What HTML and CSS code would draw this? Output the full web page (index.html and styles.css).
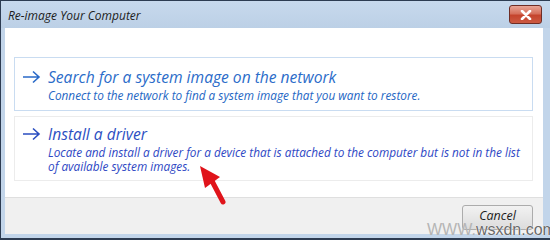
FILE: index.html
```html
<!DOCTYPE html>
<html>
<head>
<meta charset="utf-8">
<link rel="stylesheet" href="styles.css">
</head>
<body>
<div class="window">
  <div class="titlebar">
    <span class="title">Re-image Your Computer</span>
    <div class="close">
      <svg width="14" height="10" viewBox="0 0 14 10"><path d="M3 1 L11 9 M11 1 L3 9" stroke="#fff" stroke-width="2.6" stroke-linecap="round"/></svg>
    </div>
  </div>
  <div class="client">
    <div class="content">
      <div class="option option-hover">
        <svg class="arrow" width="19" height="14" viewBox="0 0 19 14"><path d="M1 7 H17 M11 1.5 L17 7 L11 12.5" fill="none" stroke="#2a6ac8" stroke-width="1.6"/></svg>
        <div class="texts">
          <div class="heading">Search for a system image on the network</div>
          <div class="desc">Connect to the network to find a system image that you want to restore.</div>
        </div>
      </div>
      <div class="option">
        <svg class="arrow" width="19" height="14" viewBox="0 0 19 14"><path d="M1 7 H17 M11 1.5 L17 7 L11 12.5" fill="none" stroke="#2a4ec0" stroke-width="1.6"/></svg>
        <div class="texts">
          <div class="heading heading-2">Install a driver</div>
          <div class="desc desc-2">Locate and install a driver for a device that is attached to the computer but is not in the list of available system images.</div>
        </div>
      </div>
    </div>
    <div class="footer">
      <div class="cancel">Cancel</div>
    </div>
  </div>
  <svg class="pointer" width="40" height="45" viewBox="0 0 40 45"><path d="M14 16 L25 37" stroke="#e0141b" stroke-width="5" stroke-linecap="round"/><path d="M2 1 L7 23 L22 12 Z" fill="#e0141b"/></svg>
  <div class="watermark"><span class="wm-light">WWW.</span><span class="wm-dark">wsxdn.com</span></div>
</div>
</body>
</html>
```
FILE: styles.css
```css
* { box-sizing: border-box; }
html, body { margin: 0; padding: 0; }
body { width: 550px; height: 240px; overflow: hidden; background: #fff; }
.window {
  position: relative;
  width: 550px;
  height: 240px;
  background: #c2d5ea;
  border-top: 1px solid #2d3c52;
  border-left: 1px solid #2d3c52;
  border-bottom: 2px solid #2d3c52;
  padding: 0 7px 4px 4px;
  display: flex;
  flex-direction: column;
  font-family: "Open Sans", "Liberation Sans", sans-serif;
  font-style: italic;
}
.titlebar {
  height: 27px;
  display: flex;
  align-items: flex-start;
  justify-content: space-between;
  background: linear-gradient(#c7d9ed, #bcd0e6);
  margin: 0 -7px 0 -4px;
  padding: 0 8px 0 7px;
}
.title {
  font-size: 12px;
  color: #1c1c1c;
  line-height: 27px;
  padding-top: 1px;
}
.close {
  margin-top: 4px;
  width: 33px;
  height: 19px;
  border: 1px solid #6e2d25;
  border-radius: 3px;
  background: linear-gradient(#e9a596 0%, #d6705c 45%, #c5442d 55%, #cc5a42 100%);
  display: flex;
  align-items: center;
  justify-content: center;
}
.client {
  flex: 1;
  display: flex;
  flex-direction: column;
  background: #fff;
}
.content {
  height: 169px;
  padding: 29px 10px 0 9px;
  display: flex;
  flex-direction: column;
  gap: 5px;
}
.option {
  display: flex;
  align-items: flex-start;
  border: 1px solid #ececec;
  padding: 6px 2px 7px 7px;
}
.option-hover {
  border-color: #c9dcf1;
  padding: 8px 2px 7px 7px;
}
.arrow { margin-top: 4px; margin-right: 7px; flex: none; }
.heading {
  font-size: 15.6px;
  line-height: 22px;
  color: #2b6cc9;
}
.heading-2 { color: #2c4fc2; }
.desc {
  font-size: 11.8px;
  line-height: 15px;
  color: #2466c4;
}
.desc-2 { color: #2e47c4; line-height: 14px; }
.footer {
  flex: 1;
  background: #f0f0f0;
  border-top: 1px solid #dfdfdf;
  display: flex;
  justify-content: flex-end;
  align-items: flex-start;
  padding: 7px 10px 0 0;
}
.cancel {
  width: 71px;
  height: 25px;
  border: 1px solid #acacac;
  border-radius: 3px;
  background: linear-gradient(#f2f2f2, #dcdcdc);
  font-size: 12.5px;
  color: #1c1c1c;
  display: flex;
  align-items: center;
  justify-content: center;
  padding-bottom: 4px;
}
.pointer { position: absolute; left: 197px; top: 164px; }
.watermark {
  position: absolute;
  left: 426px;
  top: 220px;
  font-family: "Liberation Sans", sans-serif;
  font-style: normal;
  font-size: 16px;
  line-height: 18px;
  white-space: nowrap;
}
.wm-light { color: #b5b5b5; }
.wm-dark { color: #6a6a6a; text-shadow: 0 0 1px #fff, 0 0 1px #fff; }
```
